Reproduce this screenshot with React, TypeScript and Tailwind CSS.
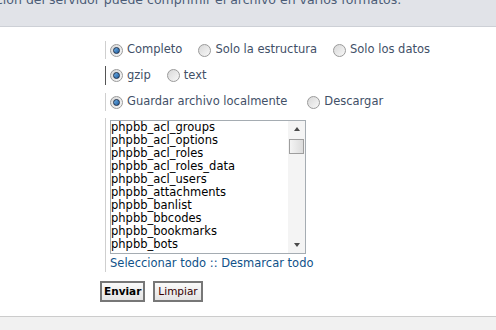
import React from "react";

const tables = [
  "phpbb_acl_groups",
  "phpbb_acl_options",
  "phpbb_acl_roles",
  "phpbb_acl_roles_data",
  "phpbb_acl_users",
  "phpbb_attachments",
  "phpbb_banlist",
  "phpbb_bbcodes",
  "phpbb_bookmarks",
  "phpbb_bots",
];

const Radio = ({ checked }: { checked?: boolean }) => (
  <span className="relative inline-flex h-[13px] w-[13px] shrink-0 items-center justify-center rounded-full border border-[#9a9a9a] bg-gradient-to-br from-[#d8d8d8] to-[#f8f8f8]">
    {checked && (
      <span className="h-[7px] w-[7px] rounded-full border border-[#1d2f4a] bg-gradient-to-br from-[#6fb0e8] to-[#1f5f9f]" />
    )}
  </span>
);

const Option = ({ label, checked }: { label: string; checked?: boolean }) => (
  <label className="flex items-center gap-[4px]">
    <Radio checked={checked} />
    <span>{label}</span>
  </label>
);

const Row = ({
  children,
  dark,
}: {
  children: React.ReactNode;
  dark?: boolean;
}) => (
  <div className="flex">
    <div className="w-[105px] shrink-0" />
    <div
      className={`flex items-center border-l pl-[4px] ${
        dark ? "border-[#555]" : "border-[#cfcfcf]"
      }`}
    >
      {children}
    </div>
  </div>
);

export default function App() {
  return (
    <div
      className="h-[330px] w-[496px] overflow-hidden bg-white text-[11.5px] text-[#425067]"
      style={{ fontFamily: '"DejaVu Sans", Verdana, sans-serif' }}
    >
      <div className="h-[27px] overflow-hidden border-b border-[#cdd0d6] bg-[#e1e3e8]">
        <p className="-mt-[9px] -ml-[4px] whitespace-nowrap text-[12.5px] text-[#4c5d77]">
          ción del servidor puede comprimir el archivo en varios formatos.
        </p>
      </div>

      <div className="flex h-[289px] flex-col pt-[14px]">
        <Row>
          <div className="flex h-[18px] items-center gap-[16px]">
            <Option label="Completo" checked />
            <Option label="Solo la estructura" />
            <Option label="Solo los datos" />
          </div>
        </Row>
        <div className="h-[7px]" />
        <Row dark>
          <div className="flex h-[19px] items-center gap-[16px]">
            <Option label="gzip" checked />
            <Option label="text" />
          </div>
        </Row>
        <div className="h-[8px]" />
        <Row>
          <div className="flex h-[18px] items-center gap-[20px]">
            <Option label="Guardar archivo localmente" checked />
            <Option label="Descargar" />
          </div>
        </Row>
        <div className="h-[7px]" />
        <Row>
          <div className="flex flex-col pt-[2px]">
            <div className="flex h-[134px] w-[196px] border border-[#a5acb2] bg-white">
              <ul className="flex-1 overflow-hidden text-[11.5px] leading-[13px] text-black">
                {tables.map((t) => (
                  <li key={t}>{t}</li>
                ))}
              </ul>
              <div className="flex w-[17px] flex-col items-center bg-[#f4f4f4]">
                <div className="flex h-[16px] items-center justify-center">
                  <span className="h-0 w-0 border-x-[3px] border-b-[4px] border-x-transparent border-b-[#4a4a4a]" />
                </div>
                <div className="mt-[2px] h-[15px] w-[15px] border border-[#9e9e9e] bg-gradient-to-r from-[#f4f4f4] to-[#dcdcdc]" />
                <div className="flex-1" />
                <div className="flex h-[16px] items-center justify-center">
                  <span className="h-0 w-0 border-x-[3px] border-t-[4px] border-x-transparent border-t-[#4a4a4a]" />
                </div>
              </div>
            </div>
            <div className="mt-[1px] text-[#105289]">
              Seleccionar todo :: Desmarcar todo
            </div>
          </div>
        </Row>

        <div className="mt-[9px] flex gap-[8px] pl-[100px] text-[10.5px]">
          <button className="h-[21px] border-2 border-[#777] bg-gradient-to-b from-[#fafafa] to-[#e4e4e4] px-[2px] font-bold text-black">
            Enviar
          </button>
          <button className="h-[21px] border-2 border-[#777] bg-gradient-to-b from-[#fafafa] to-[#e4e4e4] px-[3px] text-[#330000]">
            Limpiar
          </button>
        </div>
      </div>

      <div className="h-[14px] border-t border-[#cccccc] bg-[#f1f1f1]" />
    </div>
  );
}
